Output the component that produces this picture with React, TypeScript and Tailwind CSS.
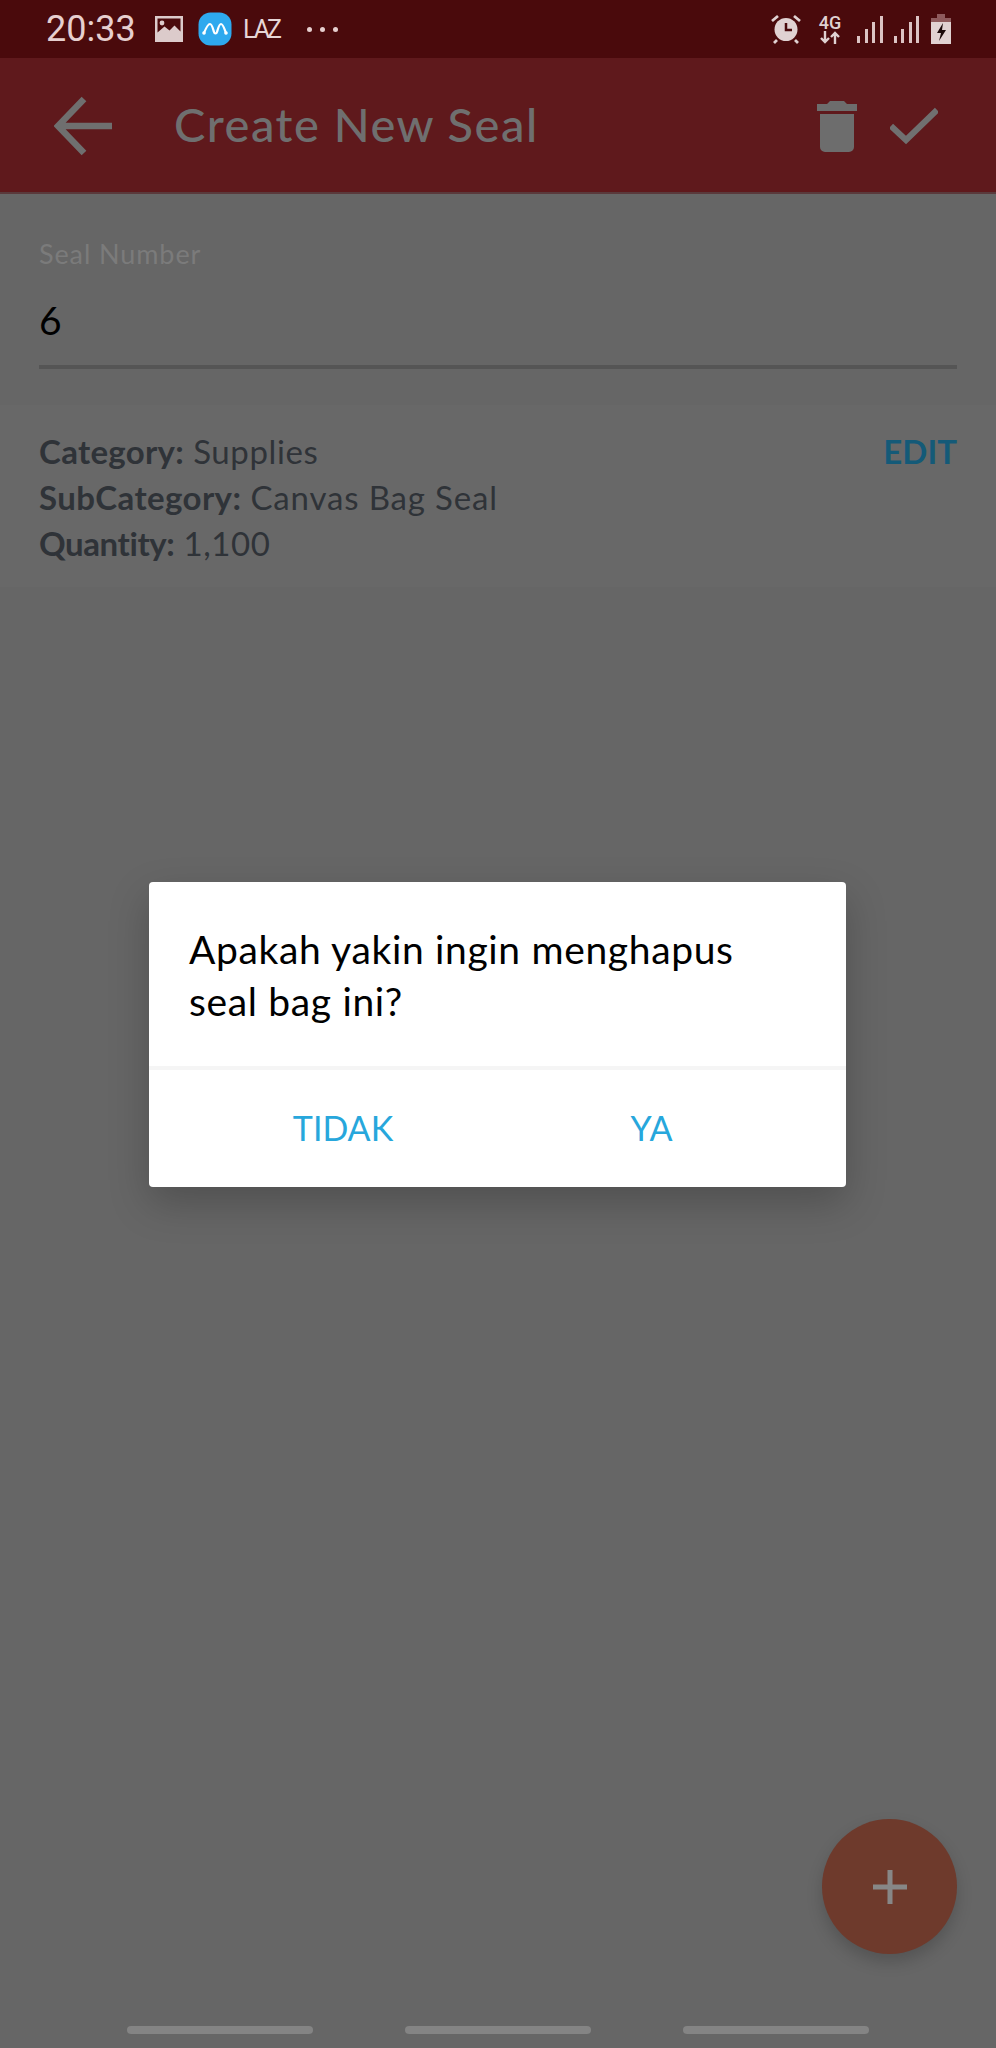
export default function App() {
  return (
    <div className="relative flex h-[2048px] w-[996px] flex-col overflow-hidden bg-[#666666] font-['Lato',sans-serif]">
      {/* Status bar */}
      <div className="flex h-[58px] items-center justify-between bg-[#4a0a0c] pl-[46px] pr-[45px] text-[#e3d0d0]">
        <div className="flex items-center">
          <span className="w-[89px] font-['Roboto',sans-serif] text-[36px] leading-none text-[#e6cfcf]">20:33</span>
          <svg className="ml-[19px]" width="30" height="28" viewBox="0 0 30 28">
            <path fillRule="evenodd" fill="#dccbcb" d="M1 1h28v26H1zM3.500 3.500v14l7-6 5 4 5-5 6 6V3.500z" />
            <circle cx="8" cy="8" r="2.400" fill="#dccbcb" />
          </svg>
          <svg className="ml-[14px]" width="34" height="34" viewBox="0 0 34 34">
            <rect x="0.500" y="0.500" width="33" height="33" rx="12" fill="#2ea9ee" />
            <path d="M6 21c2-5 4-9 6-9s3 5 4 8c.5 2 2.500 2 3 0 1-3 2-8 4-8s3 4 5 9" fill="none" stroke="#fff" strokeWidth="2.200" strokeLinecap="round" />
            <circle cx="6" cy="21" r="1.800" fill="#fff" />
            <circle cx="28" cy="21" r="1.800" fill="#fff" />
          </svg>
          <span className="ml-[11px] font-['Roboto',sans-serif] text-[25px] leading-none tracking-[-3px] text-[#e6d6d6]">LAZ</span>
          <div className="ml-[28px] flex gap-[8px]">
            <span className="h-[5px] w-[5px] rounded-full bg-[#e6cfcf]" />
            <span className="h-[5px] w-[5px] rounded-full bg-[#e6cfcf]" />
            <span className="h-[5px] w-[5px] rounded-full bg-[#e6cfcf]" />
          </div>
        </div>
        <div className="flex items-center">
          <svg width="32" height="30" viewBox="0 0 32 30">
            <circle cx="16" cy="15.500" r="11.500" fill="#e0d2d2" />
            <path d="M16 9v7h6" fill="none" stroke="#4a0a0c" strokeWidth="2.500" />
            <path d="M2 7l6-5M30 7l-6-5M7 26l-3 3M25 26l3 3" stroke="#e0d2d2" strokeWidth="2.800" />
          </svg>
          <div className="ml-[16px] flex w-[24px] flex-col items-center">
            <span className="font-['Roboto',sans-serif] text-[18px] font-medium leading-[16px] text-[#e0d2d2]">4G</span>
            <svg width="22" height="13" viewBox="0 0 22 13">
              <path d="M6 0v11M2 7l4 4 4-4M16 13V2M12 6l4-4 4 4" fill="none" stroke="#e0d2d2" strokeWidth="2.400" />
            </svg>
          </div>
          <div className="ml-[15px] flex items-end gap-[4.500px]">
            <span className="h-[7px] w-[3px] bg-[#dcc4c4]" />
            <span className="h-[14px] w-[3px] bg-[#dcc4c4]" />
            <span className="h-[21px] w-[3px] bg-[#dcc4c4]" />
            <span className="h-[27px] w-[3px] bg-[#dcc4c4]" />
          </div>
          <div className="ml-[11px] flex items-end gap-[4.500px]">
            <span className="h-[7px] w-[3px] bg-[#dcc4c4]" />
            <span className="h-[14px] w-[3px] bg-[#dcc4c4]" />
            <span className="h-[21px] w-[3px] bg-[#dcc4c4]" />
            <span className="h-[27px] w-[3px] bg-[#dcc4c4]" />
          </div>
          <svg className="ml-[12px]" width="20" height="30" viewBox="0 0 20 30">
            <path d="M6 0h8v4h6v7H0V4h6z" fill="#8e5a5c" />
            <path d="M0 8h20v22H0z" fill="#e0d2d2" />
            <path d="M12 9l-6 10h4l-2 8 7-11h-4z" fill="#1a0a0a" />
          </svg>
        </div>
      </div>

      {/* App bar */}
      <div className="flex h-[136px] items-center justify-between border-b-[2px] border-[#5a3a3c] bg-[#5f191c] pr-[58px] pt-[2px]">
        <div className="flex items-center">
          <svg className="ml-[54px]" width="58" height="60" viewBox="0 0 58 60">
            <path d="M58 30H4M30 3L4 30l26 27" fill="none" stroke="#6f6f6f" strokeWidth="6.500" />
          </svg>
          <h1 className="mb-[4px] ml-[62px] text-[47px] font-medium leading-none tracking-[1.500px] text-[#6f6f6f]">Create New Seal</h1>
        </div>
        <div className="flex items-center gap-[33px]">
          <svg width="40" height="52" viewBox="0 0 40 52">
            <path d="M13 1h14l3 3h10v7H0V4h10zM3 14h34v33a5 5 0 0 1-5 5H8a5 5 0 0 1-5-5z" fill="#6d6d6d" />
          </svg>
          <svg width="48" height="38" viewBox="0 0 48 38">
            <path d="M1 19l15 14L47 3" fill="none" stroke="#707070" strokeWidth="6" />
          </svg>
        </div>
      </div>

      {/* Seal number */}
      <div className="flex h-[211px] flex-col bg-[#666666] px-[39px] pt-[44px]">
        <span className="text-[27px] leading-[32px] tracking-[0.900px] text-[#7b7b7b]">Seal Number</span>
        <span className="mt-[27px] text-[39px] leading-[46px] text-black">6</span>
        <div className="mt-[22px] h-[4px] bg-[#555555]" />
      </div>

      {/* Details */}
      <div className="flex h-[182px] items-start justify-between bg-[#686868] px-[39px] pt-[23px]">
        <div className="text-[33px] leading-[46px] tracking-[0.600px] text-[#2f3338]">
          <div><span className="font-bold tracking-[0.300px]">Category:</span> Supplies</div>
          <div><span className="font-bold tracking-[0.400px]">SubCategory:</span> <span className="tracking-[0.850px]">Canvas Bag Seal</span></div>
          <div><span className="font-bold tracking-[-0.400px]">Quantity:</span> 1,100</div>
        </div>
        <span className="text-[33px] font-bold leading-[46px] text-[#145a78]">EDIT</span>
      </div>

      <div className="flex-1" />

      {/* Gesture bar */}
      <div className="flex h-[44px] justify-center gap-[92px] pt-[22px]">
        <span className="h-[8px] w-[186px] rounded-full bg-[#848484]" />
        <span className="h-[8px] w-[186px] rounded-full bg-[#848484]" />
        <span className="h-[8px] w-[186px] rounded-full bg-[#848484]" />
      </div>

      {/* FAB */}
      <div className="absolute left-[822px] top-[1819px] flex h-[135px] w-[135px] items-center justify-center rounded-full bg-[#6e3a2c] shadow-[0_8px_16px_rgba(0,0,0,0.18)]">
        <svg width="36" height="36" viewBox="0 0 36 36">
          <path d="M18 1v34M1 18h34" stroke="#878787" strokeWidth="5" />
        </svg>
      </div>

      {/* Dialog */}
      <div className="absolute left-[149px] top-[882px] flex h-[305px] w-[697px] flex-col rounded-[4px] bg-white shadow-[0_16px_40px_rgba(0,0,0,0.22)]">
        <div className="h-[184px] px-[40px] pt-[41px] text-[39px] leading-[52px] tracking-[0.650px] text-black">
          Apakah yakin ingin menghapus<br />seal bag ini?
        </div>
        <div className="h-[4px] bg-[#f5f5f5]" />
        <div className="flex flex-1 items-center text-[34px] text-[#27a7dc]">
          <div className="w-[388px] pb-[2px] text-center">TIDAK</div>
          <div className="flex-1 pb-[2px] pr-[80px] text-center">YA</div>
        </div>
      </div>
    </div>
  );
}
